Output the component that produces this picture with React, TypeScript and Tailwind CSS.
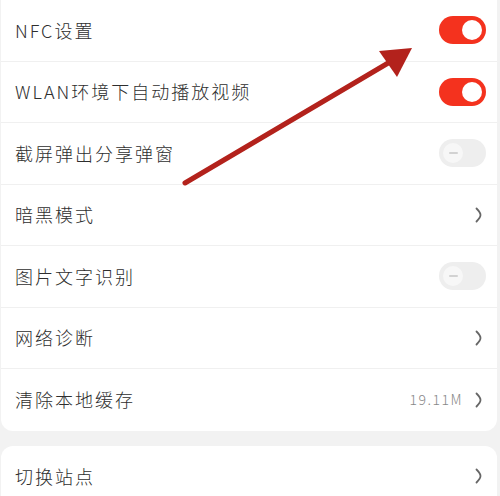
type Row = {
  label: string;
  kind: "on" | "off" | "link";
  value?: string;
};

const rows: Row[] = [
  { label: "NFC设置", kind: "on" },
  { label: "WLAN环境下自动播放视频", kind: "on" },
  { label: "截屏弹出分享弹窗", kind: "off" },
  { label: "暗黑模式", kind: "link" },
  { label: "图片文字识别", kind: "off" },
  { label: "网络诊断", kind: "link" },
  { label: "清除本地缓存", kind: "link", value: "19.11M" },
];

const Toggle = ({ on }: { on: boolean }) =>
  on ? (
    <div className="flex h-[28px] w-[47px] items-center justify-end rounded-full bg-[#f4321e] pr-[4px]">
      <div className="h-[20px] w-[20px] rounded-full bg-white" />
    </div>
  ) : (
    <div className="flex h-[28px] w-[47px] items-center rounded-full bg-[#eeeeee] pl-[4px]">
      <div className="flex h-[20px] w-[20px] items-center justify-center rounded-full bg-[#f7f7f7]">
        <div className="h-[2px] w-[9px] rounded-full bg-[#d2d2d2]" />
      </div>
    </div>
  );

// 细长的右箭头
const Chevron = () => (
  <svg width="7" height="16" viewBox="0 0 7 16" className="text-[#666]">
    <path
      d="M1.5 1.5 C3.5 3.5 5.5 6 5.5 8 C5.5 10 3.5 12.5 1.5 14.5"
      fill="none"
      stroke="currentColor"
      strokeWidth="1.8"
      strokeLinecap="round"
    />
  </svg>
);

const App = () => {
  return (
    <div
      className="relative h-[496px] w-[500px] overflow-hidden bg-[#f2f2f2] pl-[1px] pr-[3px]"
      style={{ fontFamily: '"Noto Sans CJK SC", "Noto Sans", sans-serif' }}
    >
      {/* 设置列表 */}
      <div className="-mt-[12px] rounded-[12px] bg-white pt-[12px]">
        {rows.map((row, i) => (
          <div
            key={row.label}
            className={`flex h-[61.5px] items-center justify-between pl-[14px] pr-[11px] ${
              i < rows.length - 1 ? "border-b border-[#f0f0f0]" : ""
            }`}
          >
            <span className="text-[18px] font-light tracking-[2px] text-[#2e2e2e]">{row.label}</span>
            {row.kind === "on" && <Toggle on />}
            {row.kind === "off" && <Toggle on={false} />}
            {row.kind === "link" && (
              <div className="flex items-center gap-[12px] pr-[4px]">
                {row.value && (
                  <span className="text-[14px] font-light tracking-[1.5px] text-[#888]">{row.value}</span>
                )}
                <Chevron />
              </div>
            )}
          </div>
        ))}
      </div>

      {/* 切换站点 */}
      <div className="mt-[15px] rounded-[12px] bg-white">
        <div className="flex h-[61.5px] items-center justify-between pl-[14px] pr-[15px]">
          <span className="text-[18px] font-light tracking-[2px] text-[#2e2e2e]">切换站点</span>
          <Chevron />
        </div>
      </div>

      {/* 红色箭头 */}
      <svg
        className="pointer-events-none absolute left-0 top-0"
        width="500"
        height="496"
        viewBox="0 0 500 496"
      >
        <line
          x1="185"
          y1="183"
          x2="400"
          y2="56"
          stroke="#b3221c"
          strokeWidth="5"
          strokeLinecap="round"
        />
        <polygon points="412,48 379,51 397,77" fill="#b3221c" />
      </svg>
    </div>
  );
};

export default App;
